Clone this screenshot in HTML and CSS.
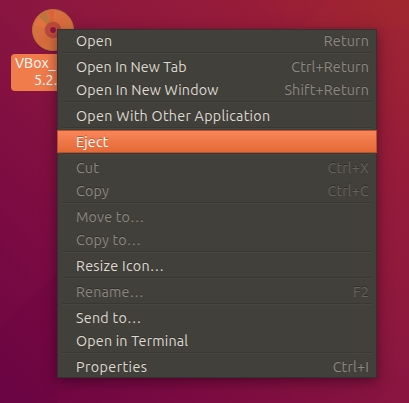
FILE: index.html
```html
<!DOCTYPE html>
<html lang="en">
<head>
<meta charset="utf-8">
<title>Desktop</title>
<link rel="stylesheet" href="styles.css">
</head>
<body>
<main class="desktop">
  <svg class="wallpaper" viewBox="0 0 409 403" aria-hidden="true">
    <path d="M330 0L304 26H409V0Z" fill="#b53024" opacity=".13"/>
    <path d="M262 0L288 22L310 0Z" fill="#b52a35" opacity=".08"/>
    <path d="M0 328L57 273V403H0Z" fill="#5c003e" opacity=".13"/>
  </svg>
  <div class="volume">
    <svg class="disc" viewBox="0 0 42 43">
      <defs>
        <linearGradient id="disc-face" x1="0" y1="0" x2="1" y2="1">
          <stop offset="0" stop-color="#d47b41"/>
          <stop offset=".5" stop-color="#d86b3d"/>
          <stop offset="1" stop-color="#d47b42"/>
        </linearGradient>
      </defs>
      <circle cx="21" cy="22" r="20.8" fill="#5d102c" opacity=".35"/>
      <circle cx="21" cy="21" r="20.5" fill="url(#disc-face)" stroke="#b8743a" stroke-width="1"/>
      <path d="M21 21L7 8L13 3Z" fill="#b8753d"/>
      <path d="M21 21L13 3L17 1.5Z" fill="#cc713b"/>
      <path d="M21 21L17 1.5L22 1Z" fill="#e05f39"/>
      <path d="M21 21L2 16L7 8Z" fill="#e27340"/>
      <circle cx="21" cy="21" r="8" fill="#bd483c" stroke="#a95438" stroke-width=".7"/>
      <circle cx="21" cy="21" r="3.6" fill="#8e1540" stroke="#c35138" stroke-width="1.4"/>
    </svg>
    <div class="name"><span>VBox_</span><span class="version">5.2.</span></div>
  </div>
  <nav class="menu">
    <div class="item"><span>Open</span><kbd>Return</kbd></div>
    <hr>
    <div class="item"><span class="snug">Open In New Tab</span><kbd>Ctrl+Return</kbd></div>
    <div class="item"><span>Open In New Window</span><kbd>Shift+Return</kbd></div>
    <hr>
    <div class="item"><span class="open">Open With Other Application</span></div>
    <hr>
    <div class="item selected"><span>Eject</span></div>
    <hr>
    <div class="item disabled"><span>Cut</span><kbd>Ctrl+X</kbd></div>
    <div class="item disabled"><span>Copy</span><kbd>Ctrl+C</kbd></div>
    <hr>
    <div class="item disabled"><span>Move to…</span></div>
    <div class="item disabled"><span>Copy to…</span></div>
    <hr>
    <div class="item"><span class="open">Resize Icon…</span></div>
    <hr>
    <div class="item disabled"><span>Rename…</span><kbd>F2</kbd></div>
    <hr>
    <div class="item"><span class="open">Send to…</span></div>
    <div class="item"><span>Open in Terminal</span></div>
    <hr>
    <div class="item"><span class="wide">Properties</span><kbd>Ctrl+I</kbd></div>
  </nav>
</main>
</body>
</html>
```
FILE: styles.css
```css
* { box-sizing: border-box; }
body { margin: 0; }
.desktop {
  position: relative;
  width: 409px;
  height: 403px;
  overflow: hidden;
  background: linear-gradient(45deg, #6d0544 0%, #7d0c42 28%, #8c173f 55%, #971c39 80%, #9f2731 100%);
  font-family: Ubuntu, "Noto Sans", sans-serif;
  font-size: 14.3px;
}
.wallpaper { position: absolute; inset: 0; width: 409px; height: 403px; }
.volume { position: absolute; left: 11px; top: 9px; width: 84px; }
.disc { display: block; width: 42px; height: 43px; margin-left: 21px; }
.name {
  display: flex;
  flex-direction: column;
  height: 37px;
  margin-top: 2px;
  padding: 1px 0 0 4px;
  border-radius: 4px;
  background: #f07b4b;
  color: #fff;
  line-height: 17px;
}
.version { padding-left: 19px; }
.menu {
  position: absolute;
  left: 57px;
  top: 29px;
  width: 320px;
  height: 349px;
  background: #42403b;
  color: #dfdbd2;
  box-shadow: inset 0 0 0 1px #33322e, inset 2px 2px 0 -1px #4b4943, 0 4px 12px rgba(30, 0, 20, .5);
}
.item {
  display: flex;
  justify-content: space-between;
  height: 23px;
  padding: 0 8px 0 19px;
  line-height: 24px;
  white-space: nowrap;
  letter-spacing: .18px;
  text-shadow: 0 -1px #373530;
}
.snug { letter-spacing: .08px; }
.open { letter-spacing: .27px; }
.wide { letter-spacing: .42px; }
kbd { font: inherit; color: #8b8982; }
hr {
  height: 3px;
  margin: 0 5px;
  border: 0;
  background: linear-gradient(#393833 1px, #484641 1px, #484641 2px, transparent 2px);
}
.disabled { color: #8b8982; text-shadow: 0 -1px #2e2d29; }
.disabled kbd { color: #65635d; }
.selected {
  border: 1px solid #b5532e;
  padding: 0 7px 0 18px;
  background: linear-gradient(#f98659, #e56936);
  color: #fff;
  line-height: 22px;
  text-shadow: 0 -1px #b95a34;
}
```
